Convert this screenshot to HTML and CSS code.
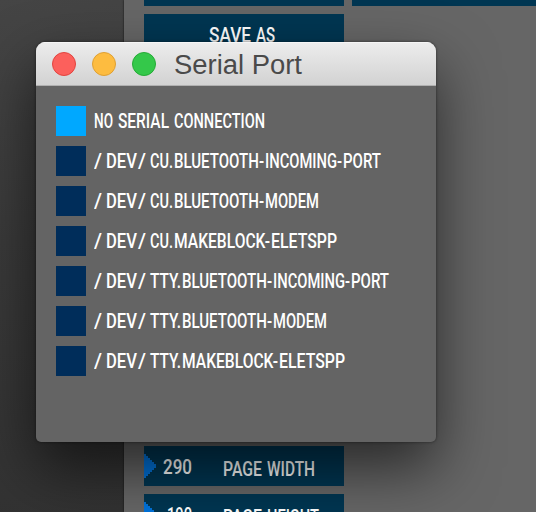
FILE: index.html
```
<!DOCTYPE html>
<html lang="en">
<head>
    <meta charset="UTF-8">
    <meta name="viewport" content="width=device-width, initial-scale=1.0">
    <title>Serial Port</title>
    <link rel="stylesheet" href="styles.css">
</head>
<body>

<!-- Main window behind the dialog -->
<main class="panel">
    <div class="column" id="left-column"></div>
    <div class="column wide">
        <div class="bar"></div>
    </div>
</main>

<!-- Serial port dialog -->
<section class="dialog">
    <header class="title-bar">
        <span class="light close"></span>
        <span class="light minimize"></span>
        <span class="light zoom"></span>
        <svg class="title" width="140" height="43"><text x="0" y="32" textLength="128" lengthAdjust="spacingAndGlyphs">Serial Port</text></svg>
    </header>
    <div class="port-list" id="port-list"></div>
</section>

<script>
    // Each word is [text, x, width]
    const slashDev = [["/", 0, 8], ["DEV", 12, 31], ["/", 44, 8]];
    const ports = [
        [["NO", 0, 19], ["SERIAL", 24, 51], ["CONNECTION", 80, 91]],
        [...slashDev, ["CU.", 56, 23], ["BLUETOOTH-", 80, 90], ["INCOMING-", 171, 77], ["PORT", 249, 38]],
        [...slashDev, ["CU.", 56, 23], ["BLUETOOTH-", 80, 90], ["MODEM", 171, 54]],
        [...slashDev, ["CU.", 56, 23], ["MAKEBLOCK-", 80, 96], ["ELETSPP", 177, 66]],
        [...slashDev, ["TTY.", 56, 31], ["BLUETOOTH-", 88, 90], ["INCOMING-", 179, 77], ["PORT", 257, 38]],
        [...slashDev, ["TTY.", 56, 31], ["BLUETOOTH-", 88, 90], ["MODEM", 179, 54]],
        [...slashDev, ["TTY.", 56, 31], ["MAKEBLOCK-", 88, 96], ["ELETSPP", 185, 66]]
    ];

    const bars = Array.from({ length: 12 }, () => ({ words: [] }));
    bars[1].words = [["SAVE", 65, 42], ["AS", 112, 19]];
    bars[1].baseline = 28;
    bars[10].words = [["PAGE", 79, 39], ["WIDTH", 123, 48]];
    bars[10].value = ["290", 19, 29];
    bars[11].words = [["PAGE", 79, 39], ["HEIGHT", 123, 52]];
    bars[11].value = ["190", 23, 25];

    function drawWord([text, x, width], y) {
        return `<text x="${x}" y="${y}" textLength="${width}" lengthAdjust="spacingAndGlyphs">${text}</text>`;
    }

    document.getElementById("port-list").innerHTML = ports.map((words, i) => `
        <div class="port">
            <span class="check ${i === 0 ? "selected" : ""}"></span>
            <svg class="label" width="320" height="30">${words.map(w => drawWord(w, 22)).join("")}</svg>
        </div>
    `).join("");

    document.getElementById("left-column").innerHTML = bars.map(bar => `
        <div class="bar">
            <svg class="label" width="200" height="40">
                ${bar.value ? `<path class="arrow" d="M0 8h2v2h2v2h2v2h2v2h2v2h2v4h-2v2h-2v2h-2v2h-2v2h-2v2h-2z"/>` + drawWord(bar.value, 28) : ""}
                ${bar.words.map(w => drawWord(w, bar.baseline || 30)).join("")}
            </svg>
        </div>
    `).join("");
</script>

</body>
</html>
```
FILE: styles.css
```
body {
    margin: 0;
    height: 512px;
    position: relative;
    overflow: hidden;
    font-family: Roboto, "Liberation Sans", sans-serif;
    background: linear-gradient(170deg, #454545 0%, #3a3a3a 40%, #303030 100%);
}

.panel {
    display: flex;
    gap: 8px;
    height: 512px;
    margin-left: 124px;
    padding-left: 20px;
    background-color: #666;
    box-shadow: 0 0 2px #111;
    overflow: hidden;
}

.column {
    display: flex;
    flex-direction: column;
    flex-shrink: 0;
    gap: 8px;
    width: 200px;
    margin-top: -34px;
}

.bar {
    flex-shrink: 0;
    height: 40px;
    background-color: #003652;
}

.label {
    display: block;
    fill: #fff;
    font-size: 19.7px;
    font-weight: 500;
}

.arrow {
    fill: #0073dc;
}

/* dialog */
.dialog {
    position: absolute;
    left: 36px;
    top: 42px;
    width: 400px;
    height: 400px;
    border-radius: 9px 9px 5px 5px;
    background-color: #646464;
    box-shadow: 0 0 3px rgba(0, 0, 0, 0.5), 0 26px 60px rgba(0, 0, 0, 0.6);
    overflow: hidden;
}

.title-bar {
    display: flex;
    align-items: center;
    gap: 16px;
    box-sizing: border-box;
    height: 44px;
    padding-left: 16px;
    background: linear-gradient(#ededed, #d2d2d2);
    border-bottom: 1px solid #b0b0b0;
    box-shadow: inset 0 1px 0 #f6f6f6;
}

.light {
    box-sizing: border-box;
    width: 24px;
    height: 24px;
    border-radius: 50%;
    border: 1px solid;
}

.close {
    background-color: #fc605c;
    border-color: #e2443f;
}

.minimize {
    background-color: #fdbc40;
    border-color: #dfa033;
}

.zoom {
    background-color: #34c84a;
    border-color: #25ab36;
}

.title {
    margin-left: 2px;
    fill: #4a4a4a;
    font-family: "Liberation Sans", Arial, sans-serif;
    font-size: 27px;
}

.port-list {
    display: flex;
    flex-direction: column;
    gap: 10px;
    padding: 20px;
}

.port {
    display: flex;
    gap: 8px;
}

.check {
    width: 30px;
    height: 30px;
    background-color: #002d5a;
}

.selected {
    background-color: #00a8ff;
}
```
